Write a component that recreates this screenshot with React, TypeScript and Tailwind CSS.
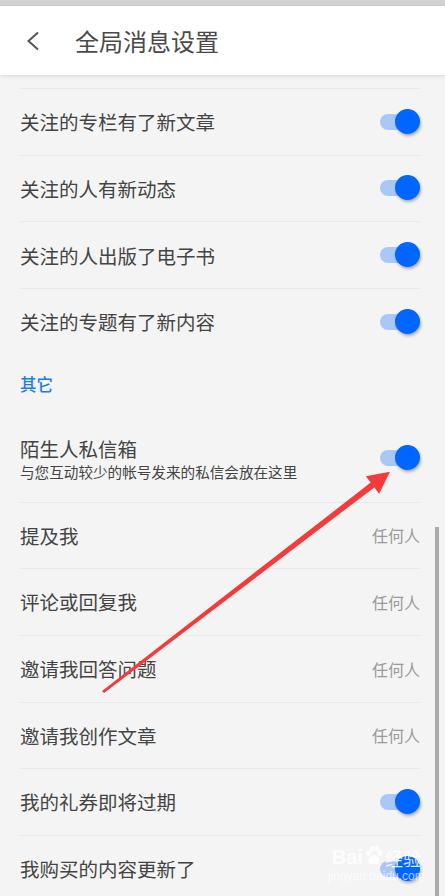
import React from 'react'

const font = { fontFamily: '"Noto Sans CJK SC", "Noto Sans", sans-serif' }

function Toggle() {
  return (
    <div className="relative h-[26px] w-[40px] shrink-0">
      <div className="absolute left-0 top-[5px] h-[16px] w-[30px] rounded-full bg-[#a9c8f8]" />
      <div className="absolute right-0 top-0 h-[25px] w-[25px] rounded-full bg-[#0066ff] shadow-[1px_2px_3px_rgba(0,0,0,0.3)]" />
    </div>
  )
}

function Row({ label, value }: { label: string; value?: string }) {
  return (
    <div className="ml-5 mr-[25px] flex h-[66.67px] items-center justify-between border-t border-[#e9e9e9]">
      <span className="text-[19.5px] text-[#444]">{label}</span>
      {value ? <span className="text-[16px] text-[#9a9a9a]">{value}</span> : <Toggle />}
    </div>
  )
}

export default function App() {
  return (
    <div className="relative h-[896px] w-[445px] overflow-hidden bg-[#f4f4f4]" style={font}>
      <div className="h-[6px] bg-[#d2d2d2]" />
      <div className="relative z-10 flex h-[69px] items-center bg-white shadow-[0_1px_4px_rgba(0,0,0,0.12)]">
        <svg className="ml-[26px]" width="14" height="20" viewBox="0 0 14 20">
          <polyline points="12,1.5 2.5,10 12,18.5" fill="none" stroke="#555" strokeWidth="2" />
        </svg>
        <span className="ml-[35px] text-[24px] text-[#4a4a4a]">全局消息设置</span>
      </div>
      <div className="h-[13px]" />
      <Row label="关注的专栏有了新文章" />
      <Row label="关注的人有新动态" />
      <Row label="关注的人出版了电子书" />
      <Row label="关注的专题有了新内容" />
      <div className="ml-5 flex h-[60px] items-center text-[16.5px] font-medium text-[#1a7cf0]">其它</div>
      <div className="ml-5 mr-[25px] flex h-[87px] items-center justify-between">
        <div className="flex flex-col pt-[2px]">
          <span className="text-[19.5px] leading-[26px] text-[#444]">陌生人私信箱</span>
          <span className="text-[14.6px] leading-[20px] text-[#444]">与您互动较少的帐号发来的私信会放在这里</span>
        </div>
        <Toggle />
      </div>
      <Row label="提及我" value="任何人" />
      <Row label="评论或回复我" value="任何人" />
      <Row label="邀请我回答问题" value="任何人" />
      <Row label="邀请我创作文章" value="任何人" />
      <Row label="我的礼券即将过期" />
      <Row label="我购买的内容更新了" />

      <div className="absolute left-[435px] top-[527px] h-[369px] w-[4px] bg-[#ababab]" />

      <svg className="absolute left-0 top-0" width="445" height="896" viewBox="0 0 445 896">
        <polygon
          points="102,691 104,693 374.3,487.4 379.2,493.7 390,471.7 365.8,476.3 370.7,482.6"
          fill="#f43b3b"
        />
      </svg>

      <div className="absolute left-[328px] top-[843px] flex flex-col items-center text-white/85">
        <div className="flex items-end gap-[1px] leading-none">
          <span className="text-[20px] font-bold" style={{ fontFamily: '"Liberation Sans", sans-serif' }}>Bai</span>
          <svg width="20" height="24" viewBox="0 0 22 24" fill="currentColor">
            <ellipse cx="5" cy="10" rx="2.6" ry="3.2" />
            <ellipse cx="9" cy="5" rx="2.6" ry="3.2" />
            <ellipse cx="14" cy="5" rx="2.6" ry="3.2" />
            <ellipse cx="18" cy="10" rx="2.6" ry="3.2" />
            <path d="M11 12c-4 0-7 5-6 8s4 2 6 2 5 1 6-2-2-8-6-8z" />
          </svg>
          <span className="text-[18px]">经验</span>
        </div>
        <span className="mt-[3px] text-[12px] leading-none text-white/70" style={{ fontFamily: '"Liberation Sans", sans-serif' }}>jingyan.baidu.com</span>
      </div>
    </div>
  )
}
